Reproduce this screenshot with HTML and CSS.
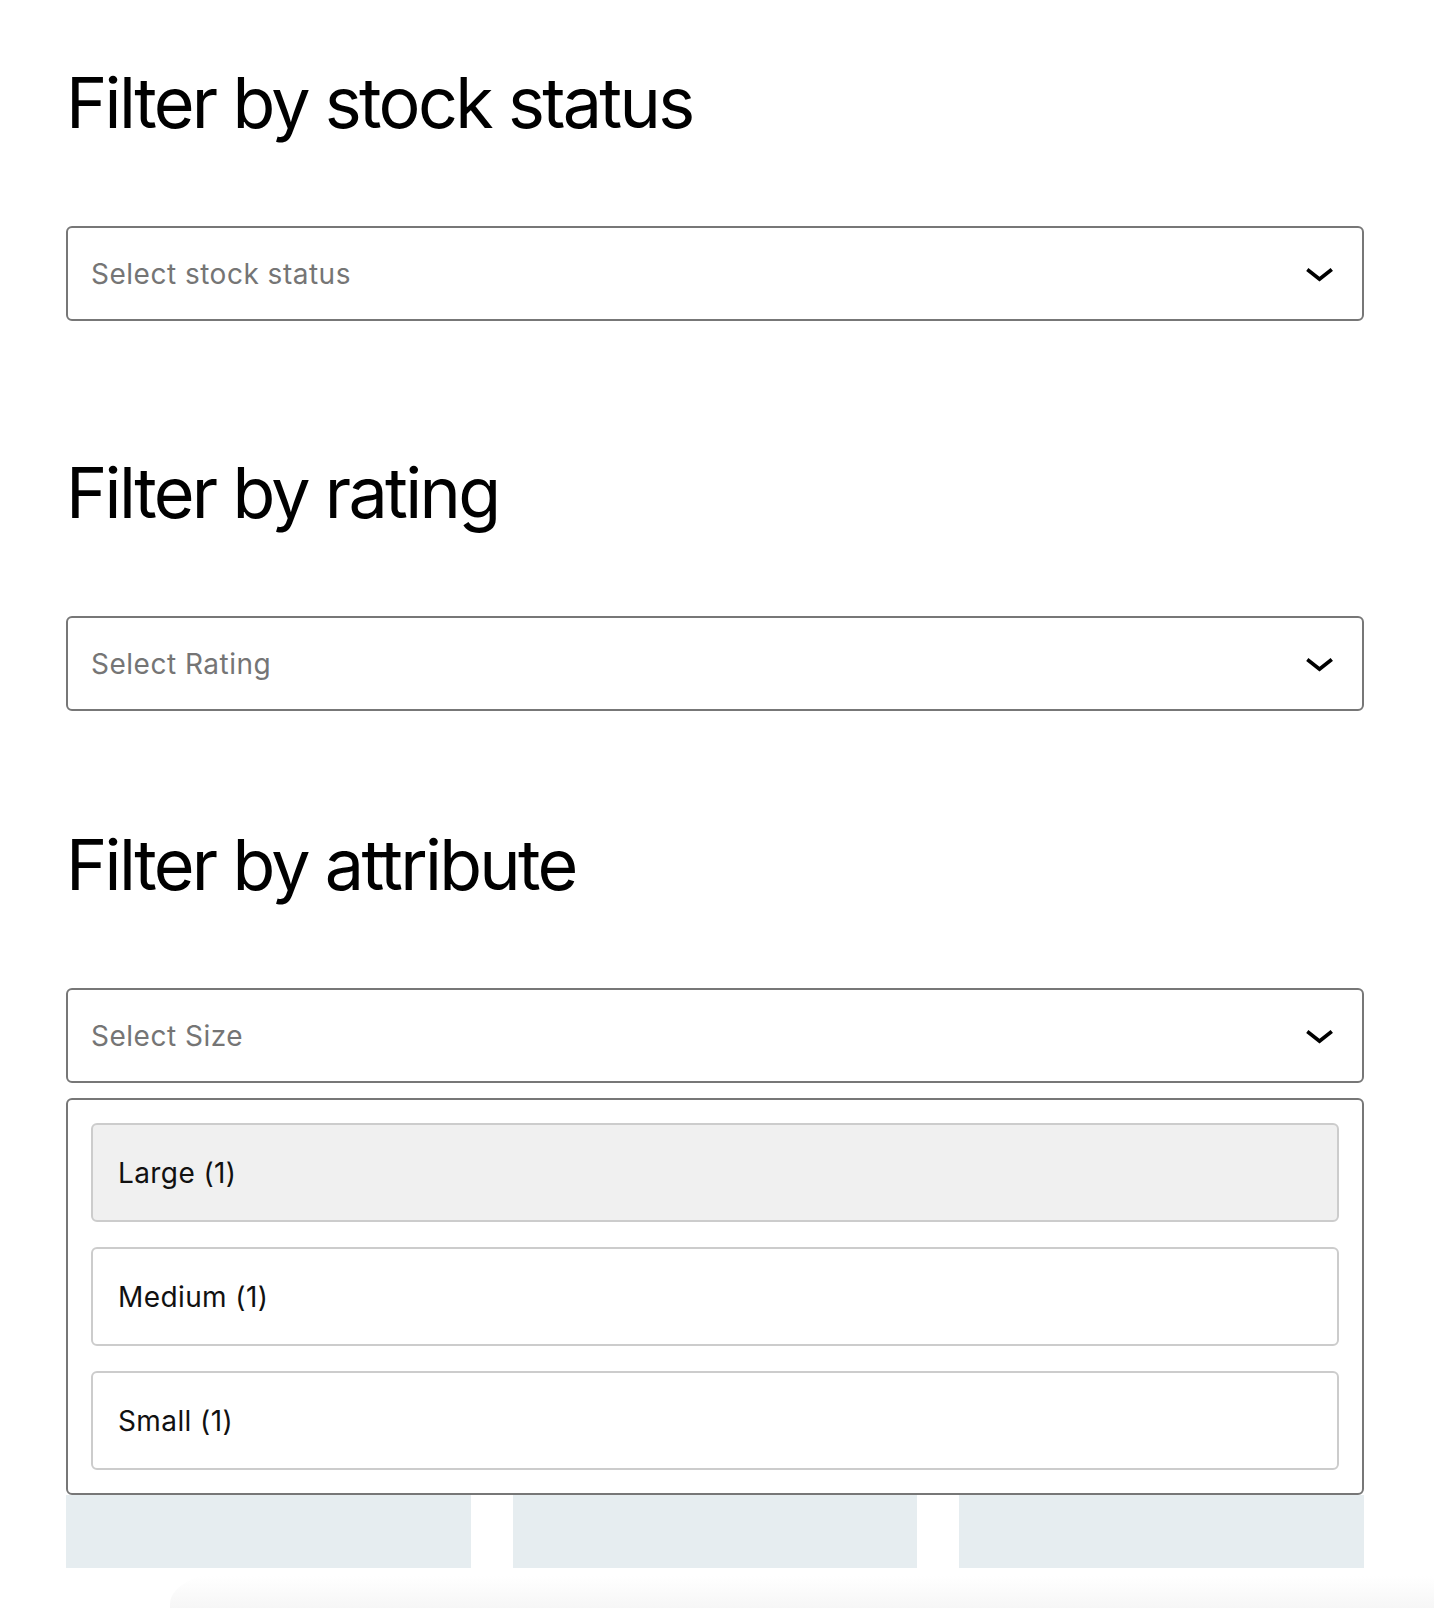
FILE: index.html
```html
<!DOCTYPE html>
<html lang="en">
<head>
    <meta charset="UTF-8">
    <meta name="viewport" content="width=device-width, initial-scale=1.0">
    <title>Product filters</title>
    <link rel="stylesheet" href="styles.css">
</head>
<body>
    <div class="page">
        <section class="filter filter-stock">
            <h2 class="filter-title">Filter by stock status</h2>
            <div class="dropdown">
                <span class="placeholder">Select stock status</span>
                <svg class="chevron" viewBox="6 10 12 6.6" width="29" height="16" aria-hidden="true"><path d="M17.5 11.6L12 16l-5.5-4.4.9-1.2L12 14l4.6-3.6 1 1.2z"/></svg>
            </div>
        </section>

        <section class="filter filter-rating">
            <h2 class="filter-title">Filter by rating</h2>
            <div class="dropdown">
                <span class="placeholder">Select Rating</span>
                <svg class="chevron" viewBox="6 10 12 6.6" width="29" height="16" aria-hidden="true"><path d="M17.5 11.6L12 16l-5.5-4.4.9-1.2L12 14l4.6-3.6 1 1.2z"/></svg>
            </div>
        </section>

        <section class="filter filter-attribute">
            <h2 class="filter-title">Filter by attribute</h2>
            <div class="dropdown is-open">
                <span class="placeholder">Select Size</span>
                <svg class="chevron" viewBox="6 10 12 6.6" width="29" height="16" aria-hidden="true"><path d="M17.5 11.6L12 16l-5.5-4.4.9-1.2L12 14l4.6-3.6 1 1.2z"/></svg>
            </div>
            <ul class="options">
                <li class="option is-active">Large (1)</li>
                <li class="option">Medium (1)</li>
                <li class="option">Small (1)</li>
            </ul>
        </section>

        <div class="products">
            <div class="product-placeholder"></div>
            <div class="product-placeholder"></div>
            <div class="product-placeholder"></div>
        </div>
    </div>
    <div class="fade"></div>
</body>
</html>
```

FILE: styles.css
```css
body {
    margin: 0;
    background: #fff;
    color: #000;
    font-family: Inter, "Noto Sans", sans-serif;
    overflow: hidden;
}
.page {
    padding: 61px 70px 0 66px;
}
.filter-title {
    margin: 0 0 81px;
    font-size: 70px;
    line-height: 84px;
    font-weight: 400;
    letter-spacing: -2.7px;
}
.filter-stock {
    margin-bottom: 130px;
}
.filter-rating {
    margin-bottom: 112px;
}
.dropdown {
    height: 91px;
    border: 2px solid #777;
    border-radius: 6px;
    display: flex;
    align-items: center;
    justify-content: space-between;
    padding: 0 28px 0 23px;
}
.placeholder {
    font-size: 28px;
    letter-spacing: 0.5px;
    color: #757575;
}
.chevron {
    margin-top: 3px;
    fill: #000;
}
.options {
    list-style: none;
    margin: 15px 0 0;
    padding: 23px 23px;
    border: 2px solid #777;
    border-radius: 6px;
    display: flex;
    flex-direction: column;
    gap: 25px;
}
.option {
    height: 95px;
    border: 2px solid #ccc;
    border-radius: 6px;
    padding: 0 25px;
    display: flex;
    align-items: center;
    font-size: 28px;
    letter-spacing: 0.4px;
    color: #111;
}
.option.is-active {
    background: #f0f0f0;
}
.products {
    display: grid;
    grid-template-columns: repeat(3, 1fr);
    gap: 42px;
}
.product-placeholder {
    height: 73px;
    background: #e6edf0;
}
.fade {
    height: 41px;
    margin-left: 170px;
    border-top-left-radius: 80px 36px;
    background: linear-gradient(#fff 20%, #f6f6f6);
}
```
